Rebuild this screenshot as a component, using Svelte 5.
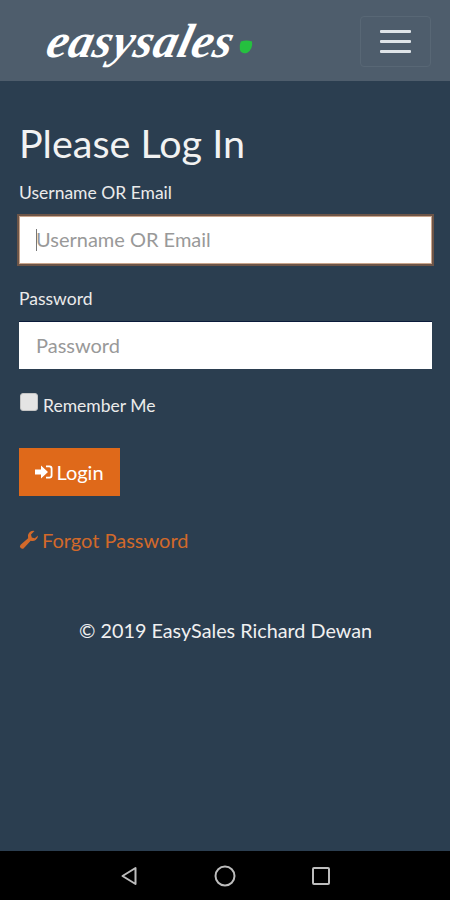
<script>
  let username = $state('');
  let password = $state('');
</script>

<div class="page">
  <header class="navbar">
    <div class="brand">
      <span class="logo">easysales</span>
      <svg class="leaf" viewBox="0 0 16 16" width="15" height="16"><path d="M3 2 Q9 0 15 2 Q16 10 10 14 Q4 16 2 11 Q1 6 3 2Z" fill="#25c03f"/></svg>
    </div>
    <button class="toggle" aria-label="Menu">
      <span></span><span></span><span></span>
    </button>
  </header>

  <main class="content">
    <h1>Please Log In</h1>
    <label class="lbl" for="u">Username OR Email</label>
    <div class="focus-wrap">
      <span class="caret"></span>
      <input id="u" class="focused" placeholder="Username OR Email" bind:value={username} />
    </div>
    <label class="lbl second" for="p">Password</label>
    <input id="p" class="plain" type="text" placeholder="Password" bind:value={password} />
    <div class="remember">
      <span class="check"></span>
      <span>Remember Me</span>
    </div>
    <button class="login">
      <svg viewBox="0 0 18 16" width="18" height="16"><path d="M0 5.500h6V1.500L13 8l-7 6.500v-4H0z" fill="#fff"/><path d="M11 1.500h3.500a3 3 0 0 1 3 3v7a3 3 0 0 1-3 3H11v-1.800h3.200a1.500 1.500 0 0 0 1.500-1.500V4.800a1.500 1.500 0 0 0-1.500-1.500H11z" fill="#fff"/></svg>
      <span>Login</span>
    </button>
    <a class="forgot" href="#forgot">
      <svg viewBox="0 0 20 20" width="20" height="20"><path d="M19 5.500a5.500 5.500 0 0 1-7.300 5.200L5 18a2.300 2.300 0 0 1-3.400-3.200l7.500-6.500A5.500 5.500 0 0 1 15.500 1L12 4.500l.8 3 3 .8L19 5.500z" fill="#d2692a"/></svg>
      <span>Forgot Password</span>
    </a>
    <p class="copy">© 2019 EasySales Richard Dewan</p>
  </main>

  <footer class="sysbar">
    <svg viewBox="0 0 24 24" width="24" height="24"><path d="M18.500 4v16L5.500 12z" fill="none" stroke="#bdbdbd" stroke-width="2" stroke-linejoin="round"/></svg>
    <svg viewBox="0 0 24 24" width="24" height="24"><circle cx="12" cy="12" r="9.500" fill="none" stroke="#bdbdbd" stroke-width="2"/></svg>
    <svg viewBox="0 0 24 24" width="24" height="24"><rect x="4" y="4" width="16" height="16" rx="1" fill="none" stroke="#bdbdbd" stroke-width="2"/></svg>
  </footer>
</div>

<style>
  :global(body) { margin: 0; background: #2b3e50; }
  .page {
    width: 450px;
    height: 900px;
    display: flex;
    flex-direction: column;
    font-family: Lato, "Open Sans", sans-serif;
    color: #ebebeb;
    background: #2b3e50;
    overflow: hidden;
  }
  .navbar {
    height: 81px;
    flex: none;
    box-sizing: border-box;
    background: #4e5d6c;
    display: flex;
    align-items: center;
    justify-content: space-between;
    padding: 0 19px 0 42px;
  }
  .brand { display: flex; align-items: center; gap: 10px; }
  .logo {
    font-family: "Liberation Serif", serif;
    font-style: italic;
    font-weight: 700;
    font-size: 48px;
    line-height: 50px;
    color: #fff;
    letter-spacing: 0.5px;
    display: inline-block;
    transform: skewX(-14deg);
    transform-origin: left bottom;
  }
  .leaf { margin-top: 12px; }
  .toggle {
    width: 71px;
    height: 51px;
    box-sizing: border-box;
    background: transparent;
    border: 1px solid #586775;
    border-radius: 4px;
    padding: 0;
    display: flex;
    flex-direction: column;
    align-items: center;
    justify-content: center;
    gap: 7px;
    margin-top: 1px;
  }
  .toggle span { display: block; width: 31px; height: 3px; background: #dfe4e8; border-radius: 1px; }
  .content { flex: 1; padding: 0 18px 0 19px; }
  h1 {
    margin: 39px 0 0 0;
    font-size: 39.500px;
    font-weight: 400;
    line-height: 46px;
    color: #f2f2f2;
  }
  .lbl { display: block; font-size: 17.500px; line-height: 22px; color: #ebebeb; }
  .lbl { margin-top: 16px; }
  .lbl.second { margin-top: 24px; }
  .focus-wrap { position: relative; margin-top: 12px; }
  .caret { position: absolute; left: 17px; top: 13px; width: 1px; height: 22px; background: #777; }
  input {
    display: block;
    width: 100%;
    height: 48px;
    box-sizing: border-box;
    border: 0;
    border-radius: 0;
    background: #fff;
    padding: 0 17px 2px;
    font-family: inherit;
    font-size: 20px;
    color: #333;
    outline: none;
  }
  input::placeholder { color: #999; opacity: 1; }
  .focused { box-shadow: inset 0 0 0 1px #c9a58c, 0 0 0 2px #6d5548; }
  .plain { margin-top: 11px; border-top: 1px solid #0a1a3a; }
  .remember {
    display: flex;
    align-items: flex-start;
    gap: 5px;
    margin-top: 23px;
    margin-left: 1px;
    font-size: 17.500px;
    line-height: 22px;
  }
  .remember span:last-child { margin-top: 3px; }
  .check {
    width: 18px;
    height: 18px;
    box-sizing: border-box;
    background: #e4e4e4;
    border: 1px solid #c4c4c4;
    border-radius: 3px;
    margin-top: 1px;
  }
  .login {
    display: flex;
    align-items: center;
    justify-content: center;
    gap: 3px;
    width: 101px;
    height: 48px;
    margin-top: 31px;
    padding: 0;
    border: 0;
    background: #df691a;
    color: #fff;
    font-family: inherit;
    font-size: 20px;
  }
  .forgot {
    display: flex;
    align-items: center;
    gap: 3px;
    margin-top: 32px;
    color: #d2692a;
    text-decoration: none;
    font-size: 20px;
    line-height: 24px;
  }
  .copy {
    margin: 66px 0 0;
    text-align: center;
    font-size: 19.800px;
    line-height: 24px;
    color: #f0f0f0;
  }
  .sysbar {
    height: 49px;
    flex: none;
    background: #000;
    display: flex;
    align-items: center;
    justify-content: center;
    gap: 72px;
  }
</style>
